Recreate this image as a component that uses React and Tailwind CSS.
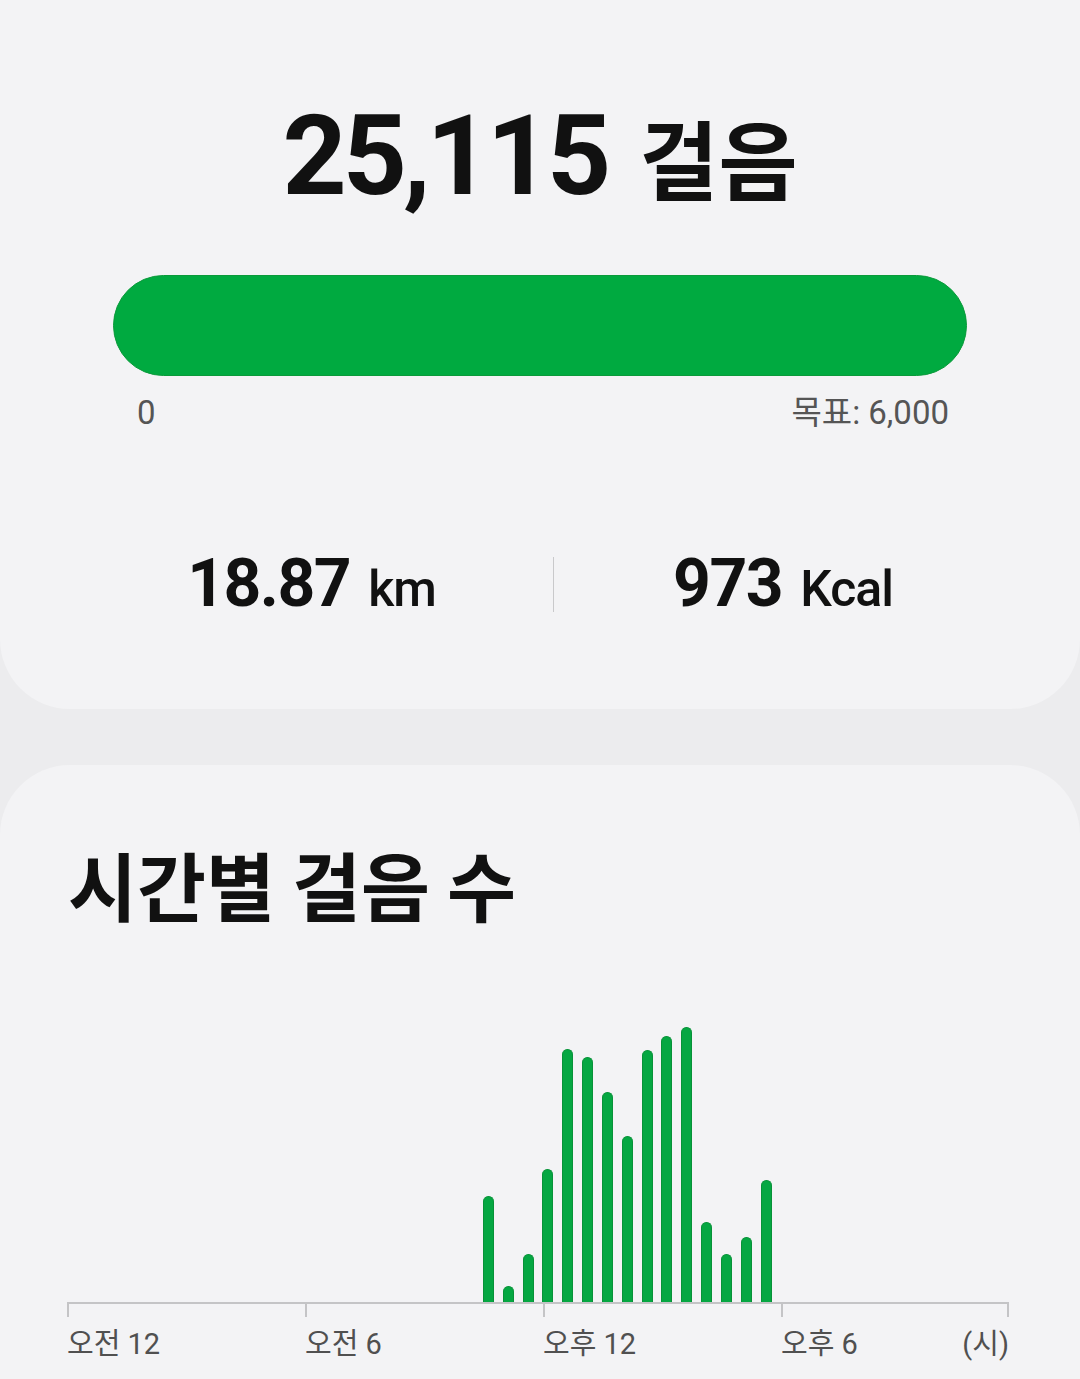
const BARS = [106, 16, 48, 133, 253, 245, 210, 166, 252, 266, 275, 80, 48, 65, 122];

const TICKS = [
  { label: "오전 12", w: "w-[238px]" },
  { label: "오전 6", w: "w-[238px]" },
  { label: "오후 12", w: "w-[238px]" },
  { label: "오후 6", w: "w-[228px]", last: true },
];

const FONT = "font-['Roboto','Noto_Sans_CJK_KR',sans-serif]";

function Stat({ value, unit }) {
  return (
    <div className="flex items-baseline justify-center">
      <span className="text-[66px] leading-none font-bold tracking-[-1.5px] text-[#111]">
        {value}
      </span>
      <span className="ml-[18px] text-[50px] leading-none font-medium tracking-[-1px] text-[#111]">
        {unit}
      </span>
    </div>
  );
}

export default function App() {
  return (
    <div className={`min-h-screen bg-[#ececee] ${FONT} overflow-hidden`}>
      {/* summary card */}
      <div className="bg-[#f3f3f5] rounded-b-[70px] h-[709px] pt-[100px]">
        <div className="flex items-baseline justify-center">
          <span className="text-[112px] leading-none font-bold tracking-[-4px] text-[#111]">
            25,115
          </span>
          <span className="ml-[32px] text-[86px] leading-none font-bold text-[#111] font-['Noto_Sans_CJK_KR',sans-serif]">
            걸음
          </span>
        </div>

        <div className="mx-[113px] mt-[63px]">
          <div className="h-[101px] rounded-full bg-[#00aa40] border border-[#0a9a3a]" />
          <div className="mt-[20px] flex justify-between pl-[24px] pr-[18px] text-[33px] leading-none text-[#555]">
            <span>0</span>
            <span>목표: 6,000</span>
          </div>
        </div>

        <div className="mt-[122px] pl-[70px] pr-[68px] grid grid-cols-[483px_1px_1fr] items-center">
          <Stat value="18.87" unit="km" />
          <div className="h-[55px] bg-[#c9c9cb]" />
          <Stat value="973" unit="Kcal" />
        </div>
      </div>

      {/* hourly card */}
      <div className="mt-[56px] bg-[#f3f3f5] rounded-t-[70px] pt-[81px] pb-[40px]">
        <h2 className="pl-[68px] text-[75px] leading-none font-bold text-[#111] font-['Noto_Sans_CJK_KR',sans-serif]">
          시간별 걸음 수
        </h2>

        <div className="ml-[67px] w-[942px] mt-[101px]">
          <div className="h-[280px] flex items-end pl-[416px] gap-[8.83px]">
            {BARS.map((h, i) => (
              <div
                key={i}
                className="w-[11px] rounded-t-full bg-[#05a742] border-x border-t border-[#079238]"
                style={{ height: h }}
              />
            ))}
          </div>
          <div className="h-[2px] bg-[#c4c4c6]" />
          <div className="flex">
            {TICKS.map((t) => (
              <div
                key={t.label}
                className={`${t.w} h-[13px] border-l-2 border-[#c4c4c6] ${t.last ? "border-r-2" : ""}`}
              />
            ))}
          </div>
          <div className="flex mt-[13px] text-[29px] leading-none text-[#505050]">
            {TICKS.map((t) => (
              <div key={t.label} className={`${t.w} flex justify-between`}>
                <span>{t.label}</span>
                {t.last && <span>(시)</span>}
              </div>
            ))}
          </div>
        </div>
      </div>
    </div>
  );
}
